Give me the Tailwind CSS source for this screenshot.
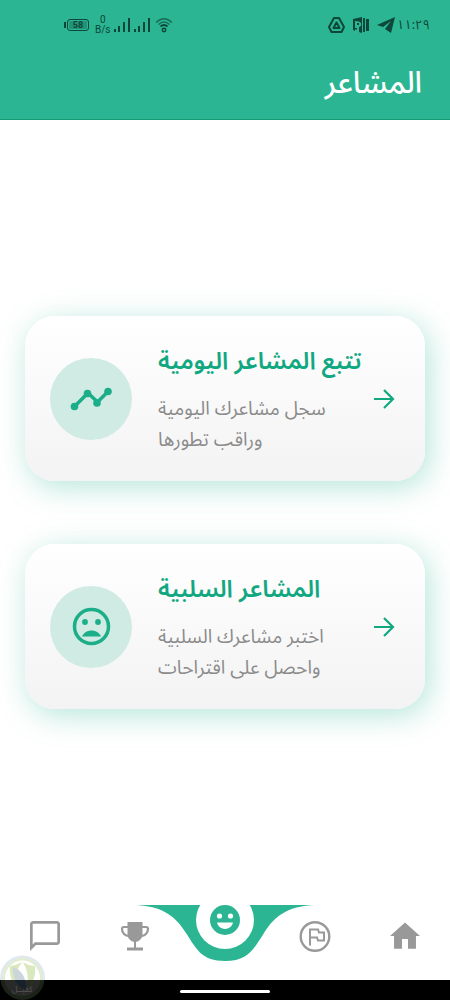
<!DOCTYPE html>
<html lang="ar" dir="rtl">
<head>
<meta charset="utf-8">
<meta name="viewport" content="width=device-width, initial-scale=1">
<title>المشاعر</title>
<script src="https://cdn.jsdelivr.net/npm/@tailwindcss/browser@4"></script>
</head>
<body class="relative flex min-h-screen flex-col bg-white font-['Noto_Sans_Arabic','Noto_Sans','DejaVu_Sans',sans-serif]">

<header class="flex h-[120px] flex-col border-b border-[#169a74] bg-[#2bb592] text-white">
  <div class="flex h-[50px] items-center justify-between pr-5 pl-16 text-[#0d4739]">
    <div class="flex items-center gap-2">
      <div class="flex items-center gap-0.5">
        <time class="text-[13px] leading-5">١١:٢٩</time>
        <svg class="h-[16px] w-[18px]" viewBox="0 0 18 16" fill="currentColor"><path d="M0 8 18 0 14 16 8 12 14 4 6 10z"/></svg>
      </div>
      <svg class="h-4 w-4" viewBox="0 0 16 16" fill="currentColor"><path fill-rule="evenodd" d="M0 2 9 0v16l-3-1v-5q3-1 2-4-1-2-6-2v10l-2-1zM4 6h2v2H4zM2 11h2v2l-2-1z"/><path d="M10 1h2v14h-2zM13 2h3v12h-3z"/></svg>
      <svg class="h-4 w-[17px]" viewBox="0 0 17 16" fill="none" stroke="currentColor" stroke-width="2" stroke-linejoin="round"><path d="M6 1h5l5 9-2.500 5h-10L1 10z"/><path d="m8.500 5.500 3 5.500h-6z"/></svg>
    </div>
    <div dir="ltr" class="flex items-center gap-[3px] font-[Roboto,sans-serif]">
      <div class="flex items-center gap-px">
        <span class="h-1.5 w-0.5 bg-current"></span>
        <span class="flex h-3 w-[22px] items-center justify-center rounded-[3px] border border-current"><span class="h-2 rounded-[1px] bg-[#0d4739]/30 px-1 text-[9px] leading-2 font-bold">58</span></span>
      </div>
      <div class="ml-[3px] flex flex-col items-center text-[10px] leading-[10px]"><span>0</span><span>B/s</span></div>
      <svg class="h-[14px] w-4" viewBox="0 0 16 14" fill="currentColor"><path d="M0 11h2v3H0zM4 8h2v6H4zM9 4h2v10H9zM14 0h2v14h-2z"/></svg>
      <svg class="ml-px h-[14px] w-4" viewBox="0 0 16 14" fill="currentColor"><path d="M0 11h2v3H0zM4 8h2v6H4zM9 4h2v10H9zM14 0h2v14h-2z"/></svg>
      <svg class="ml-0.5 h-4 w-[18px]" viewBox="0 0 18 16" fill="none" stroke="currentColor" stroke-width="1.500"><path opacity=".65" d="M1 5.500Q9-2 17 5.500M3.500 7.500Q9 2.500 14.500 7.500"/><path stroke-width="2" d="M5.500 9.500Q9 6.500 12.500 9.500"/><circle cx="9" cy="13" r="1.700"/></svg>
    </div>
  </div>
  <h1 class="px-7 text-[30px] leading-[68px] font-medium">المشاعر</h1>
</header>

<main class="flex flex-1 flex-col justify-center gap-[63px] px-[25px]">
  <a href="#daily" dir="ltr" class="flex min-h-[165px] items-center rounded-[30px] bg-linear-to-b from-white to-[#f3f3f3] px-[25px] shadow-[4px_6px_30px_#2bb59259]">
    <span class="flex size-[82px] shrink-0 items-center justify-center rounded-full bg-[#d0ebe3]">
      <svg class="size-[42px]" viewBox="0 0 42 42" fill="#1bae89"><path d="M5 28 18 15 27.500 24 38.500 13" fill="none" stroke="#1bae89" stroke-width="3.500"/><circle cx="4.500" cy="28.500" r="3.800"/><circle cx="17.500" cy="15.500" r="3.800"/><circle cx="27" cy="25" r="3.800"/><circle cx="38" cy="13.500" r="3.800"/></svg>
    </span>
    <span dir="rtl" class="ml-[26px] flex-1 text-left whitespace-nowrap">
      <strong class="block text-[24px] leading-10 font-semibold text-[#11a881]">تتبع المشاعر اليومية</strong>
      <span class="mt-3 block text-[19px] leading-[31px] text-[#8b8b8b]">سجل مشاعرك اليومية<br>وراقب تطورها</span>
    </span>
    <svg class="mr-[5px] size-[22px] shrink-0" viewBox="0 0 22 22" fill="none" stroke="#11a881" stroke-width="2.200"><path d="M1 11h19M11 2l9 9-9 9"/></svg>
  </a>
  <a href="#negative" dir="ltr" class="flex min-h-[165px] items-center rounded-[30px] bg-linear-to-b from-white to-[#f3f3f3] px-[25px] shadow-[4px_6px_30px_#2bb59259]">
    <span class="flex size-[82px] shrink-0 items-center justify-center rounded-full bg-[#d0ebe3]">
      <svg class="size-[42px]" viewBox="0 0 42 42" fill="#1bae89"><circle cx="21.500" cy="20.500" r="17" fill="none" stroke="#1bae89" stroke-width="3.500"/><circle cx="15" cy="16" r="2.900"/><circle cx="28" cy="16" r="2.900"/><path d="M12 30.500c3.500-8 15.500-8 19 0z"/></svg>
    </span>
    <span dir="rtl" class="ml-[26px] flex-1 text-left whitespace-nowrap">
      <strong class="block text-[24px] leading-10 font-semibold text-[#11a881]">المشاعر السلبية</strong>
      <span class="mt-3 block text-[19px] leading-[31px] text-[#8b8b8b]">اختبر مشاعرك السلبية<br>واحصل على اقتراحات</span>
    </span>
    <svg class="mr-[5px] size-[22px] shrink-0" viewBox="0 0 22 22" fill="none" stroke="#11a881" stroke-width="2.200"><path d="M1 11h19M11 2l9 9-9 9"/></svg>
  </a>
</main>

<nav class="relative h-[75px]" aria-label="التنقل">
  <svg class="absolute bottom-0 left-1/2 h-[90px] w-[180px] -translate-x-1/2" viewBox="0 0 180 90"><path fill="#2bb592" d="M0 15C26 16 40 25 51 43C62 60 67 71 90 71S118 60 129 43C140 25 154 16 180 15z"/><circle cx="90" cy="30" r="29" fill="#fff"/></svg>
  <div dir="ltr" class="relative grid h-full grid-cols-5 text-[#999]">
    <button type="button" aria-label="المحادثة" class="flex justify-center pt-[13px]"><svg class="size-9" viewBox="0 0 24 24" fill="currentColor"><path d="M20 2H4c-1.100 0-2 .9-2 2v18l4-4h14c1.100 0 2-.9 2-2V4c0-1.100-.9-2-2-2zm.2 14.200H5.200L3.800 17.600V3.800h16.400z"/></svg></button>
    <button type="button" aria-label="الإنجازات" class="flex justify-center pt-[13px]"><svg class="size-9" viewBox="0 0 36 36" fill="currentColor"><path d="M10.500 4h15v13c0 3-3 6-6.500 7v5.500h7v3H10v-3h7V24c-3.500-1-6.500-4-6.500-7z"/><path d="M11 9H7q-2 0-2 2c0 4 3 7 7 7M25 9h4q2 0 2 2c0 4-3 7-7 7" fill="none" stroke="currentColor" stroke-width="2.200"/></svg></button>
    <button type="button" aria-label="المشاعر" aria-current="page" class="flex justify-center text-[#2bb592]"><svg class="size-[30px]" viewBox="0 0 30 30"><circle cx="15" cy="15" r="15" fill="currentColor"/><g fill="#fff"><circle cx="9.500" cy="11" r="2.600"/><circle cx="20.500" cy="11" r="2.600"/><path d="M7 17.500h16c-2 8.500-14 8.500-16 0z"/></g></svg></button>
    <button type="button" aria-label="الأهداف" class="flex justify-center pt-[13px]"><svg class="size-9" viewBox="0 0 36 36" fill="none" stroke="currentColor" stroke-width="2.400"><circle cx="18" cy="18.500" r="14.300"/><path d="M13 27.500V11.500h8l1 3h5v8h-6l-1-3h-7" stroke-width="2"/></svg></button>
    <button type="button" aria-label="الرئيسية" class="flex justify-center pt-[13px]"><svg class="size-9" viewBox="0 0 24 24" fill="currentColor"><path d="M10 20.500v-6.500h4v6.500h5.300V12H22L12 3 2 12h2.700v8.500z"/></svg></button>
  </div>
</nav>

<div class="flex h-5 justify-center bg-black pt-2.5"><span class="h-[3px] w-[90px] rounded-sm bg-white"></span></div>

<svg class="absolute bottom-0 left-0 h-[45px] w-[46px]" viewBox="0 0 46 45" aria-hidden="true">
  <defs><clipPath id="light"><path d="M0 0h46v25H0z"/></clipPath><clipPath id="dark"><path d="M0 25h46v20H0z"/></clipPath></defs>
  <g clip-path="url(#light)">
    <circle cx="22.500" cy="23" r="20.500" fill="#fff" stroke="#e2e9ee" stroke-width="4"/>
    <circle cx="22.500" cy="23" r="18.500" fill="#fff" stroke="#e2eecb" stroke-width="2"/>
    <path d="M22 7q-5 3-12 4c-1 9 2 18 9 23-5-9-4-17 3-27z" fill="#d9e8be"/>
    <path d="M23 7q6 4 12 4c1 10-2 17-8 23 2-9 1-18-4-27z" fill="#d9e8be"/>
    <path d="M13 12c9 3 14 12 13 23-8-3-14-12-13-23z" fill="#cbd5da"/>
  </g>
  <g clip-path="url(#dark)">
    <circle cx="22.500" cy="23" r="20" fill="#292929" stroke="#1b2217" stroke-width="4"/>
    <path d="M13 20c10 2 14 6 13 15-6-2-12-8-13-15z" fill="#17212a"/>
    <path d="M31 25h4q-2 5-6 8z" fill="#273018"/>
    <text x="22" y="37" text-anchor="middle" font-size="8" fill="#555">كفيــل</text>
  </g>
</svg>
</body>
</html>
